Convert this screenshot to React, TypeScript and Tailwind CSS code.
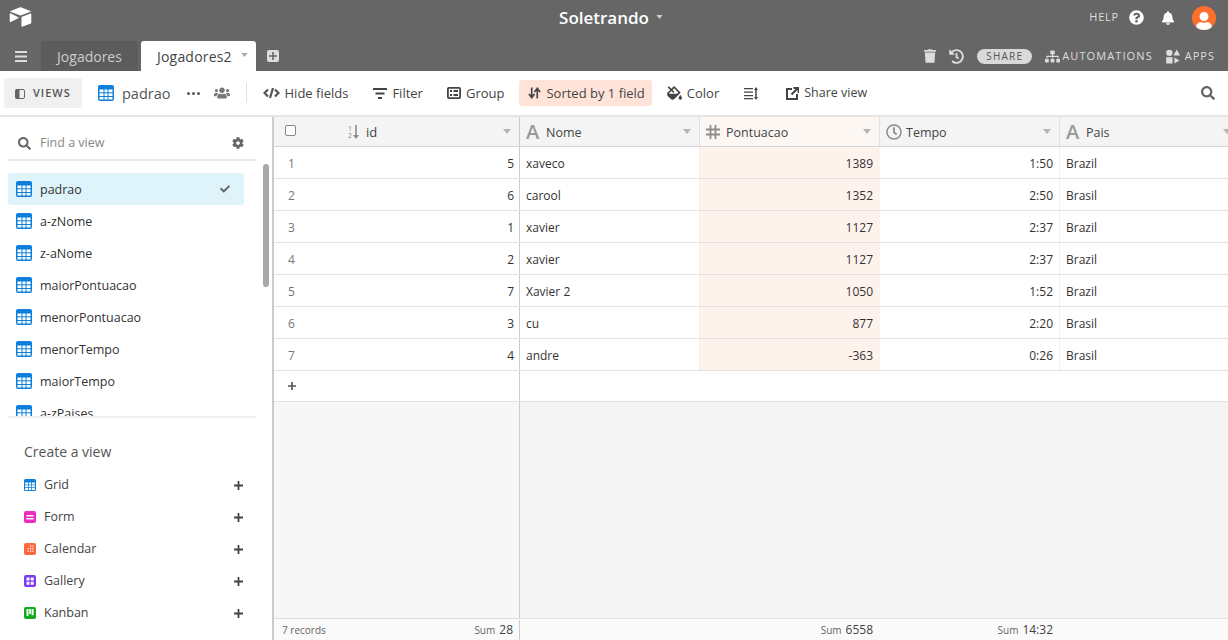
import type { ReactNode } from "react"
import { FaBell, FaCheck, FaCog, FaFillDrip, FaHistory, FaQuestionCircle, FaRegClock, FaSearch, FaSitemap, FaTrash, FaUser, FaUsers } from "react-icons/fa"

const rows = [
  ["5", "xaveco", "1389", "1:50", "Brazil"],
  ["6", "carool", "1352", "2:50", "Brasil"],
  ["1", "xavier", "1127", "2:37", "Brazil"],
  ["2", "xavier", "1127", "2:37", "Brazil"],
  ["7", "Xavier 2", "1050", "1:52", "Brazil"],
  ["3", "cu", "877", "2:20", "Brasil"],
  ["4", "andre", "-363", "0:26", "Brasil"],
]

const views = ["padrao", "a-zNome", "z-aNome", "maiorPontuacao", "menorPontuacao", "menorTempo", "maiorTempo", "a-zPaises"]

function GridIcon({ className }: { className?: string }) {
  return (
    <svg viewBox="0 0 16 16" className={className}>
      <rect width="16" height="16" rx="2" fill="currentColor" />
      <path d="M1.500 4.500h4v2.700h-4zM6.500 4.500h3v2.700h-3zM10.500 4.500h4v2.700h-4zM1.500 8.200h4v2.700h-4zM6.500 8.200h3v2.700h-3zM10.500 8.200h4v2.700h-4zM1.500 11.900h4v2.600h-4zM6.500 11.900h3v2.600h-3zM10.500 11.900h4v2.600h-4z" fill="#fff" />
    </svg>
  )
}

function Caret({ className }: { className?: string }) {
  return (
    <svg viewBox="0 0 8 5" className={className}>
      <path d="M0 0h8L4 5z" fill="currentColor" />
    </svg>
  )
}

function Plus({ className }: { className?: string }) {
  return (
    <svg viewBox="0 0 10 10" className={className}>
      <path d="M4 0h2v4h4v2H6v4H4V6H0V4h4z" fill="currentColor" />
    </svg>
  )
}

function ToolButton({ icon, label, active, className = "" }: { icon: ReactNode; label?: string; active?: boolean; className?: string }) {
  return (
    <div className={`flex h-[26px] items-center gap-[5px] rounded-[3px] pl-[9px] ${active ? "bg-[#ffe3d9] pr-[7px]" : "pr-[9px]"} ${className}`}>
      {icon}
      {label && <span className="pt-px">{label}</span>}
    </div>
  )
}

function FieldHeader({ icon, label, tinted }: { icon: ReactNode; label: string; tinted?: boolean }) {
  return (
    <div className={`flex h-full w-[180px] shrink-0 items-center border-r border-[#e0e0e0] pl-[6px] pr-[8px] ${tinted ? "bg-[#fdf7f4]" : ""}`}>
      <span className="flex w-[20px] items-center justify-start text-[#8c8c8c]">{icon}</span>
      <span className="grow pt-[3px] text-[12.5px] text-[#444]">{label}</span>
      <Caret className="h-[5px] w-[8px] text-[#b5b5b5]" />
    </div>
  )
}

function LetterIcon() {
  return <span className="text-[20px] leading-none font-semibold text-[#999]">A</span>
}

function CreateIcon({ kind }: { kind: string }) {
  if (kind === "Grid") return <GridIcon className="h-[12px] w-[12px] text-[#0e7fdc]" />
  const color: Record<string, string> = { Form: "#ee2bc0", Calendar: "#fb6a3c", Gallery: "#7c39ed", Kanban: "#11ac1a" }
  const inner: Record<string, ReactNode> = {
    Form: <path d="M2.500 4h7v1.600h-7zM2.500 7h7v1.600h-7z" fill="#fff" />,
    Calendar: <path d="M6 2.500h1.200v1.300H6zM8.300 2.500h1.200v1.300H8.300zM3.600 5h1.200v1.300H3.600zM6 5h1.200v1.300H6zM8.300 5h1.200v1.300H8.300zM3.600 7.500h1.200v1.300H3.600zM6 7.500h1.200v1.300H6zM8.300 7.500h1.200v1.300H8.300z" fill="#fff" />,
    Gallery: <path d="M2.500 2.500h3v3h-3zM6.700 2.500h3v3h-3zM2.500 6.700h3v3h-3zM6.700 6.700h3v3h-3z" fill="#fff" />,
    Kanban: <path d="M2.500 2h2v7h-2zM5.200 2h1.700v5H5.200zM7.600 2h2v6.200h-2z" fill="#fff" />,
  }
  return (
    <svg viewBox="0 0 12 12" className="h-[12px] w-[12px]">
      <rect width="12" height="12" rx="2" fill={color[kind]} />
      {inner[kind]}
    </svg>
  )
}

export default function App() {
  return (
    <div className="flex h-[640px] w-[1228px] flex-col overflow-hidden bg-white font-['Open_Sans',sans-serif] text-[13px] text-[#444]">
      <header className="h-[71px] shrink-0 bg-[#666] text-white">
        <div className="flex h-[41px] items-center pb-[6px] pl-[9px] pr-[12px]">
          <div className="flex-1">
            <svg viewBox="0 0 24 22" className="h-[21px] w-[23px]">
              <path d="M11 .6 1.600 4.200c-.5.2-.5.7 0 .9l9.500 3.600c.6.2 1.200.2 1.800 0l9.500-3.600c.5-.2.5-.7 0-.9L13 .6c-.7-.3-1.300-.3-2 0z" fill="#fff" />
              <path d="M13 11v9.200c0 .5.400.7.800.5l9-3.500c.3-.1.500-.4.500-.7V7.300c0-.5-.4-.7-.8-.5l-9 3.500c-.3.100-.5.400-.5.700z" fill="#fff" />
              <path d="M.7 7v8.200c0 .4.500.7.900.5l8.100-4c.4-.2.400-.7 0-.9L1.500 6.500C1.100 6.300.7 6.500.7 7z" fill="#fff" />
            </svg>
          </div>
          <div className="flex items-center gap-[7px] pr-[3px]">
            <span className="text-[17px] font-semibold">Soletrando</span>
            <Caret className="h-[4px] w-[7px] -translate-y-[1px] text-[#ccc]" />
          </div>
          <div className="flex flex-1 items-center justify-end">
            <span className="text-[11px] tracking-[0.8px] text-[#ddd]">HELP</span>
            <FaQuestionCircle className="ml-[10px] h-[15px] w-[15px]" />
            <FaBell className="ml-[17px] h-[14px] w-[14px]" />
            <span className="ml-[17px] flex h-[24px] w-[24px] items-end justify-center overflow-hidden rounded-full bg-[#ff6f2c]">
              <FaUser className="h-[18px] w-[18px]" />
            </span>
          </div>
        </div>
        <div className="flex h-[30px] items-end pr-[13px]">
          <div className="flex h-full w-[41px] items-center pl-[15px]">
            <svg viewBox="0 0 12 11" className="h-[11px] w-[12px] text-[#ddd]">
              <path d="M0 0h12v2H0zM0 4.500h12v2H0zM0 9h12v2H0z" fill="currentColor" />
            </svg>
          </div>
          <div className="flex h-full w-[97px] items-center justify-center rounded-t-[3px] bg-[#5c5c5c] text-[14px] text-[#ccc]">Jogadores</div>
          <div className="ml-[3px] flex h-full w-[115px] items-center rounded-t-[3px] bg-white pl-[16px] text-[14px] text-[#444]">
            <span className="tracking-[0.2px]">Jogadores2</span>
            <Caret className="ml-[9px] h-[4px] w-[7px] -translate-y-[1px] text-[#aaa]" />
          </div>
          <div className="ml-[11px] flex h-full items-center">
            <span className="flex h-[12px] w-[12px] items-center justify-center rounded-[2px] bg-[#ddd] text-[#666]">
              <Plus className="h-[8px] w-[8px]" />
            </span>
          </div>
          <div className="ml-auto flex h-full items-center text-[#ddd]">
            <FaTrash className="h-[14px] w-[12px]" />
            <FaHistory className="ml-[13px] h-[15px] w-[15px]" />
            <span className="ml-[13px] flex h-[15px] w-[55px] items-center justify-center rounded-full bg-[#d9d9d9] text-[10px] tracking-[1.2px] text-[#555]">SHARE</span>
            <FaSitemap className="ml-[13px] h-[15px] w-[15px]" />
            <span className="ml-[2px] text-[11px] tracking-[1.1px]">AUTOMATIONS</span>
            <svg viewBox="0 0 15 15" className="ml-[13px] h-[15px] w-[14px]">
              <circle cx="3.600" cy="3.600" r="3.400" fill="currentColor" />
              <path d="M11.500 0 15 6.500H8z" fill="currentColor" />
              <rect x=".2" y="8.200" width="6.800" height="6.800" fill="currentColor" />
              <path d="m9 8.500 5.500 3.200L9 15z" fill="currentColor" />
            </svg>
            <span className="ml-[5px] text-[11px] tracking-[1px]">APPS</span>
          </div>
        </div>
      </header>

      <div className="flex h-[46px] shrink-0 items-center border-b-2 border-[#e5e5e5] pl-[4px] pr-[13px]">
        <div className="flex h-[30px] w-[78px] items-center rounded-[3px] bg-[#f0f0f0] pl-[11px] pt-px text-[11px] font-semibold tracking-[1px] text-[#555]">
          <svg viewBox="0 0 10 10" className="mr-[8px] h-[10px] w-[10px]">
            <rect x=".5" y=".5" width="9" height="9" rx="1.500" fill="none" stroke="#666" />
            <rect x=".5" y=".5" width="4" height="9" fill="#666" />
          </svg>
          VIEWS
        </div>
        <GridIcon className="ml-[16px] h-[16px] w-[16px] text-[#0e7fdc]" />
        <span className="ml-[8px] pt-px text-[14.5px] text-[#555]">padrao</span>
        <span className="ml-[16px] flex gap-[2px]">
          <i className="h-[3px] w-[3px] rounded-full bg-[#555]" />
          <i className="h-[3px] w-[3px] rounded-full bg-[#555]" />
          <i className="h-[3px] w-[3px] rounded-full bg-[#555]" />
        </span>
        <FaUsers className="ml-[14px] h-[16px] w-[16px] text-[#777]" />
        <div className="ml-[16px] mr-[7px] h-[20px] w-px bg-[#e0e0e0]" />
        <div className="flex items-center">
          <ToolButton
            label="Hide fields"
            icon={
              <svg viewBox="0 0 17 12" className="h-[12px] w-[17px]" fill="none" stroke="#555" strokeWidth="2.200">
                <path d="M5 2.500 1.500 6 5 9.500M12 2.500 15.500 6 12 9.500M10 1 7 11" />
              </svg>
            }
          />
          <ToolButton
            className="ml-[7px]"
            label="Filter"
            icon={
              <svg viewBox="0 0 14 11" className="h-[11px] w-[14px]">
                <path d="M0 0h14v2H0zM2.500 4.500h9v2h-9zM5 9h4v2H5z" fill="#444" />
              </svg>
            }
          />
          <ToolButton
            className="ml-[6px]"
            label="Group"
            icon={
              <svg viewBox="0 0 14 12" className="h-[12px] w-[14px]" fill="none" stroke="#444" strokeWidth="1.800">
                <rect x=".9" y=".9" width="12.200" height="10.200" rx="1" />
                <path d="M3 4h2M6.500 4H11M3 8h2M6.500 8H11" />
              </svg>
            }
          />
          <ToolButton
            active
            className="ml-[6px]"
            label="Sorted by 1 field"
            icon={
              <svg viewBox="0 0 14 12" className="h-[12px] w-[13px]" fill="none" stroke="#444" strokeWidth="1.800">
                <path d="M4 0v10M1 7l3 4 3-4M10 12V2M7 5l3-4 3 4" />
              </svg>
            }
          />
          <ToolButton className="ml-[6px]" label="Color" icon={<FaFillDrip className="h-[14px] w-[15px] text-[#444]" />} />
          <ToolButton
            className="ml-[7px]"
            icon={
              <svg viewBox="0 0 14 13" className="h-[13px] w-[14px]">
                <path d="M0 1h9v1.300H0zM0 4.500h9v1.300H0zM0 8h9v1.300H0zM0 11h9v1.300H0z" fill="#444" />
                <path d="M12 2v9" stroke="#444" strokeWidth="1.500" />
                <path d="M10 3l2-3 2 3zM10 10l2 3 2-3z" fill="#444" />
              </svg>
            }
          />
          <ToolButton
            className="ml-[10px] text-[12.5px]"
            label="Share view"
            icon={
              <svg viewBox="0 0 13 13" className="h-[13px] w-[13px]" fill="none" stroke="#444" strokeWidth="2">
                <path d="M6 2H1v10h10V7M5.500 7.500 11.500 1.500M7.500 1h5v5" />
              </svg>
            }
          />
        </div>
        <FaSearch className="ml-auto h-[14px] w-[14px] text-[#666]" />
      </div>

      <div className="flex min-h-0 grow">
        <aside className="relative flex w-[274px] shrink-0 flex-col border-r-[2px] border-[#ccc]">
          <div className="ml-[8px] mr-[16px] flex h-[44px] shrink-0 items-center border-b-2 border-[#e8e8e8] pl-[10px] pr-[12px] pt-[10px]">
            <FaSearch className="h-[13px] w-[13px] text-[#666]" />
            <span className="ml-[9px] grow text-[12.5px] text-[#888]">Find a view</span>
            <FaCog className="h-[12px] w-[12px] text-[#666]" />
          </div>
          <div className="h-[255px] shrink-0 overflow-hidden pl-[8px] pt-[12px]">
            {views.map((v, i) => (
              <div key={v} className={`flex h-[32px] w-[236px] shrink-0 items-center rounded-[3px] pl-[8px] pr-[14px] text-[12.5px] text-[#333] ${i === 0 ? "bg-[#dff3fb]" : ""}`}>
                <GridIcon className="h-[16px] w-[16px] shrink-0 text-[#0e7fdc]" />
                <span className="ml-[8px] grow pt-[2px]">{v}</span>
                {i === 0 && <FaCheck className="h-[10px] w-[10px] text-[#666]" />}
              </div>
            ))}
          </div>
          <div className="absolute left-[263px] top-[47px] h-[123px] w-[6px] rounded-full bg-[#a8a8a8]" />
          <div className="ml-[8px] mr-[16px] border-t-2 border-[#f0f0f0]" />
          <div className="pl-[24px] pr-[29px] pt-[23px]">
            <div className="text-[14px] text-[#555]">Create a view</div>
            <div className="mt-[7px]">
              {["Grid", "Form", "Calendar", "Gallery", "Kanban"].map((k) => (
                <div key={k} className="flex h-[32px] items-center text-[12.5px] text-[#444]">
                  <CreateIcon kind={k} />
                  <span className="ml-[8px] grow">{k}</span>
                  <Plus className="h-[9px] w-[9px] text-[#444]" />
                </div>
              ))}
            </div>
          </div>
        </aside>

        <main className="flex min-w-0 grow flex-col overflow-hidden bg-[#f4f4f4]">
          <div className="flex h-[30px] shrink-0 border-b border-[#d5d5d5] bg-[#f4f4f4]">
            <div className="flex w-[246px] shrink-0 items-center border-r border-[#ccc] pr-[8px]">
              <span className="ml-[11px] h-[11px] w-[11px] -translate-y-px rounded-[2px] border border-[#888] bg-white" />
              <span className="ml-[52px] flex w-[18px] items-center text-[#8c8c8c]">
                <span className="flex flex-col text-[7px] leading-[7px]">
                  <span>1</span>
                  <span>2</span>
                </span>
                <svg viewBox="0 0 6 14" className="ml-[1px] h-[14px] w-[6px]">
                  <path d="M2.200 0h1.600v10H6l-3 4-3-4h2.200z" fill="currentColor" />
                </svg>
              </span>
              <span className="grow pt-[3px] text-[#444]">id</span>
              <Caret className="h-[5px] w-[8px] text-[#b5b5b5]" />
            </div>
            <FieldHeader label="Nome" icon={<LetterIcon />} />
            <FieldHeader
              tinted
              label="Pontuacao"
              icon={
                <svg viewBox="0 0 14 14" className="h-[14px] w-[14px]" stroke="currentColor" strokeWidth="1.800">
                  <path d="M4.500 0v14M9.500 0v14M0 4.500h14M0 9.500h14" />
                </svg>
              }
            />
            <FieldHeader label="Tempo" icon={<FaRegClock className="h-[16px] w-[16px]" />} />
            <FieldHeader label="Pais" icon={<LetterIcon />} />
          </div>
          <div className="bg-white text-[12px] text-[#333]">
            {rows.map((r, i) => (
              <div key={i} className="flex h-[32px] border-b border-[#e2e2e2]">
                <div className="flex w-[246px] shrink-0 items-center justify-between border-r border-[#ccc] pl-[14px] pr-[5px] pt-[2px]">
                  <span className="text-[#777]">{i + 1}</span>
                  <span>{r[0]}</span>
                </div>
                <div className="flex w-[180px] shrink-0 items-center border-r border-[#efefef] px-[6px] pt-[2px]">{r[1]}</div>
                <div className="flex w-[180px] shrink-0 items-center justify-end bg-[#fef2ed] pl-[6px] pr-[7px] pt-[2px]">{r[2]}</div>
                <div className="flex w-[180px] shrink-0 items-center justify-end border-r border-[#efefef] pl-[6px] pr-[6px] pt-[2px]">{r[3]}</div>
                <div className="flex grow items-center px-[6px] pt-[2px]">{r[4]}</div>
              </div>
            ))}
            <div className="flex h-[31px] border-b border-[#e2e2e2]">
              <div className="flex w-[246px] shrink-0 items-center border-r border-[#ccc] pl-[14px]">
                <Plus className="h-[8px] w-[8px] text-[#555]" />
              </div>
            </div>
          </div>
          <div className="flex min-h-0 grow">
            <div className="w-[246px] shrink-0 border-r border-[#ccc] bg-[#f7f7f7]" />
          </div>
          <div className="flex h-[22px] shrink-0 items-center border-t border-[#e0e0e0] bg-[#fafafa] pt-px text-[10px] text-[#666]">
            <div className="flex h-full w-[246px] shrink-0 items-center justify-between border-r border-[#ccc] pl-[8px] pr-[6px]">
              <span>7 records</span>
              <span className="flex items-center gap-[4px]">
                Sum <span className="text-[12px] text-[#444]">28</span>
              </span>
            </div>
            <div className="w-[180px] shrink-0" />
            <div className="flex w-[180px] shrink-0 items-center justify-end gap-[4px] pr-[7px]">
              Sum <span className="text-[12px] text-[#444]">6558</span>
            </div>
            <div className="flex w-[180px] shrink-0 items-center justify-end gap-[4px] pr-[7px]">
              Sum <span className="text-[12px] text-[#444]">14:32</span>
            </div>
          </div>
        </main>
      </div>
    </div>
  )
}
